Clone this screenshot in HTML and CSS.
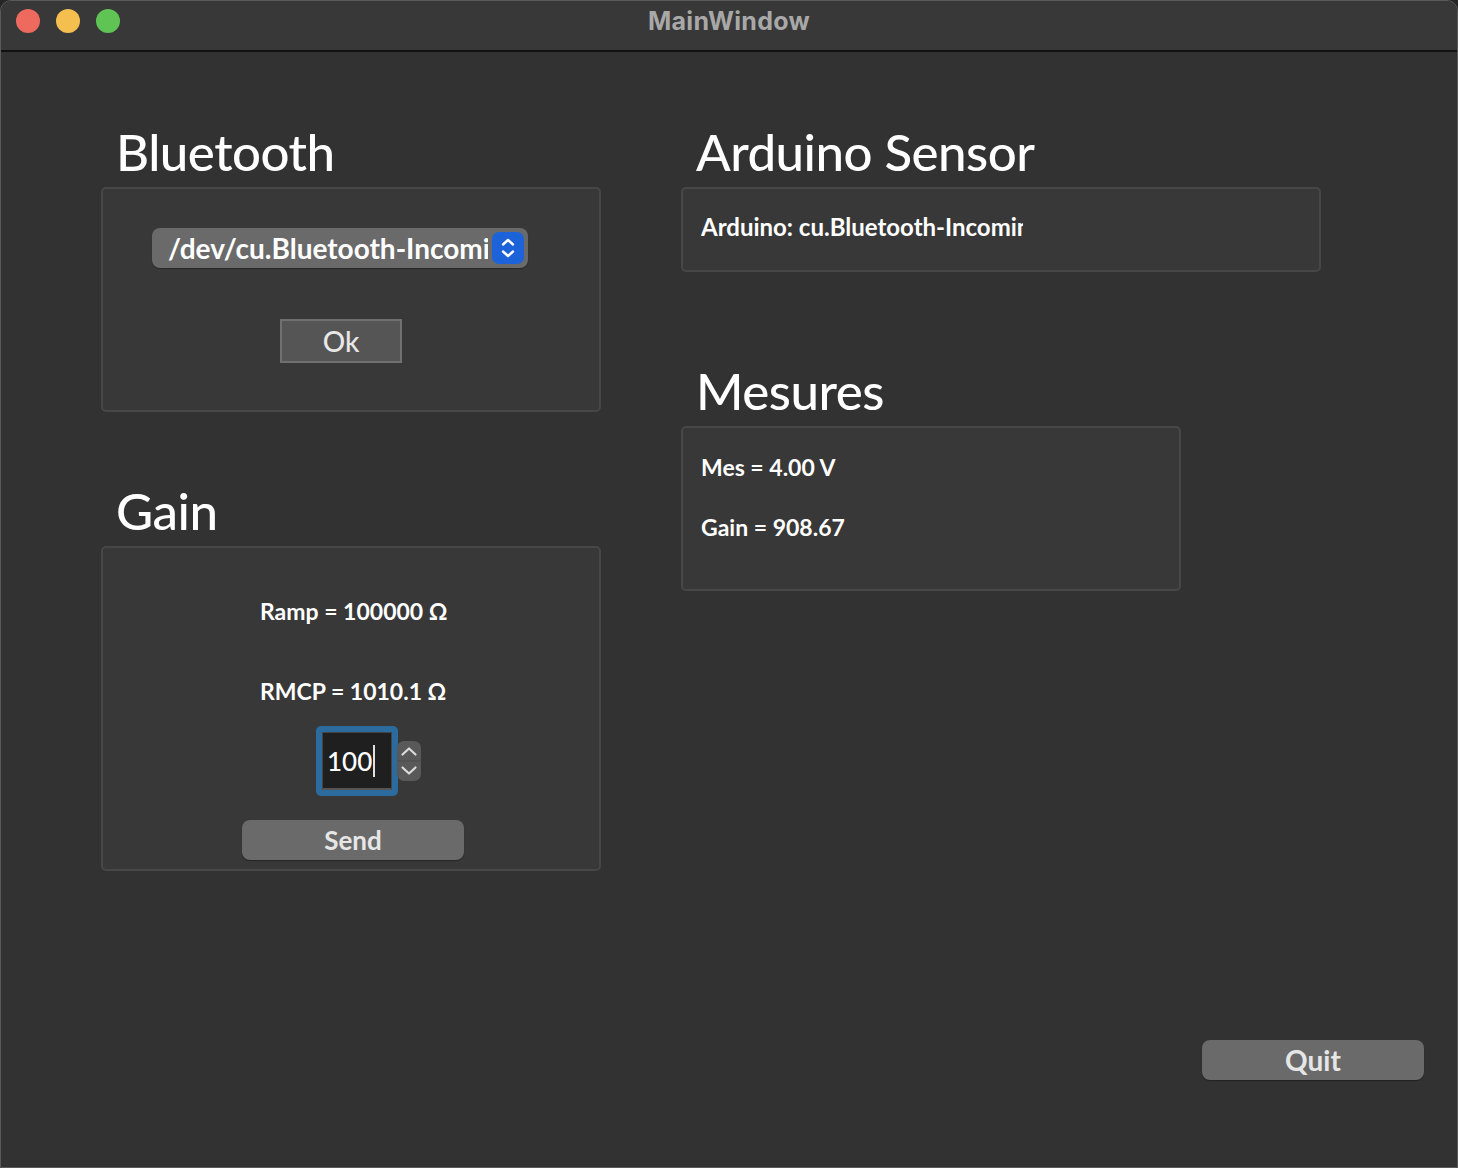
FILE: index.html
```html
<!DOCTYPE html>
<html>
<head>
<meta charset="utf-8">
<link rel="stylesheet" href="styles.css">
</head>
<body>
<div class="window">
  <header class="titlebar">
    <div class="lights">
      <span class="light red"></span>
      <span class="light yellow"></span>
      <span class="light green"></span>
    </div>
    <div class="wtitle">MainWindow</div>
  </header>
  <main class="content">
    <div class="columns">
      <section class="col left">
        <h2 class="title">Bluetooth</h2>
        <div class="box bt-box">
          <div class="combo">
            <span class="combo-text">/dev/cu.Bluetooth-Incoming-Port</span>
            <span class="combo-btn">
              <svg width="32" height="32" viewBox="0 0 32 32"><path d="M11 12.5 L16 8 L21 12.5" fill="none" stroke="#fff" stroke-width="2.4" stroke-linecap="round" stroke-linejoin="round"/><path d="M11 19.5 L16 24 L21 19.5" fill="none" stroke="#fff" stroke-width="2.4" stroke-linecap="round" stroke-linejoin="round"/></svg>
            </span>
          </div>
          <button class="ok-btn">Ok</button>
        </div>
        <h2 class="title gain-title">Gain</h2>
        <div class="box gain-box">
          <div class="line ramp">Ramp = 100000 Ω</div>
          <div class="line rmcp">RMCP = 1010.1 Ω</div>
          <div class="spin">
            <div class="spin-ring"><div class="spin-input">100<span class="caret"></span></div></div>
            <div class="stepper">
              <svg width="24" height="40" viewBox="0 0 24 40"><path d="M5.5 13.5 L12 7.5 L18.5 13.5" fill="none" stroke="#dcdcdc" stroke-width="2.2" stroke-linecap="round" stroke-linejoin="round"/><line x1="0" y1="20" x2="24" y2="20" stroke="#4c4c4c" stroke-width="1"/><path d="M5.5 26.5 L12 32.5 L18.5 26.5" fill="none" stroke="#dcdcdc" stroke-width="2.2" stroke-linecap="round" stroke-linejoin="round"/></svg>
            </div>
          </div>
          <button class="push send">Send</button>
        </div>
      </section>
      <section class="col right">
        <h2 class="title">Arduino Sensor</h2>
        <div class="box ard-box">
          <div class="ard-text">Arduino: cu.Bluetooth-Incoming-Port</div>
        </div>
        <h2 class="title mes-title">Mesures</h2>
        <div class="box mes-box">
          <div class="line">Mes = 4.00 V</div>
          <div class="line gain-line">Gain = 908.67</div>
        </div>
      </section>
    </div>
    <div class="footer">
      <button class="push quit">Quit</button>
    </div>
  </main>
</div>
</body>
</html>
```

FILE: styles.css
```css
* { box-sizing: border-box; }
html, body {
  margin: 0;
  padding: 0;
  background: #262626;
  width: 1458px;
  height: 1168px;
  overflow: hidden;
}
.window {
  width: 1458px;
  height: 1168px;
  display: flex;
  flex-direction: column;
  background: #323232;
  border: 1px solid #5a5a5a;
  border-radius: 11px 11px 0 0;
  overflow: hidden;
  font-family: "Lato", "DejaVu Sans", sans-serif;
  color: #fff;
}
.titlebar {
  height: 51px;
  flex: none;
  background: #383838;
  border-bottom: 2px solid #111;
  position: relative;
  display: flex;
  align-items: center;
}
.lights {
  display: flex;
  gap: 16px;
  padding-left: 15px;
  margin-top: -9px;
}
.light {
  width: 24px;
  height: 24px;
  border-radius: 50%;
  display: block;
}
.red { background: #ee6a5f; }
.yellow { background: #f5bf4f; }
.green { background: #5fc454; }
.wtitle {
  position: absolute;
  left: 0;
  right: 0;
  top: 5px;
  text-align: center;
  font-family: "Inter", "Liberation Sans", sans-serif;
  font-weight: 700;
  font-size: 25px;
  color: #a8a8a8;
  letter-spacing: 0.3px;
}
.content {
  flex: 1;
  display: flex;
  flex-direction: column;
  padding-left: 100px;
}
.columns {
  display: flex;
  gap: 80px;
  padding-top: 72px;
}
.col {
  display: flex;
  flex-direction: column;
}
.left { width: 500px; }
.right { width: 640px; }
.title {
  margin: 0 0 7px 15px;
  font-size: 51px;
  line-height: 56px;
  font-weight: 500;
  letter-spacing: -0.5px;
}
.gain-title { margin-top: 71px; }
.mes-title { margin-top: 91px; }
.box {
  background: #383838;
  border: 2px solid #474747;
  border-radius: 5px;
}
.bt-box {
  height: 225px;
  padding-top: 39px;
  padding-left: 49px;
}
.combo {
  width: 376px;
  height: 40px;
  background: #6a6a6a;
  border-radius: 8px;
  display: flex;
  align-items: center;
  padding-left: 16px;
  padding-right: 4px;
  box-shadow: 0 1px 1px rgba(0,0,0,0.3);
}
.combo-text {
  flex: 1;
  overflow: hidden;
  white-space: nowrap;
  font-size: 28px;
  font-weight: 700;
  color: #fff;
}
.combo-btn {
  width: 32px;
  height: 32px;
  background: #1c63d9;
  border-radius: 7px;
  display: block;
  flex: none;
  margin-left: 4px;
}
.combo-btn svg { display: block; }
.ok-btn {
  display: block;
  margin: 51px 0 0 128px;
  width: 122px;
  height: 44px;
  background: #555;
  border: 2px solid #707070;
  border-radius: 0;
  font-family: inherit;
  font-size: 28px;
  font-weight: 500;
  color: #e8e8e8;
  padding: 0;
}
.gain-box {
  height: 325px;
  padding-top: 49px;
  display: flex;
  flex-direction: column;
}
.line {
  font-size: 23px;
  line-height: 28px;
  font-weight: 700;
  color: #fff;
}
.ramp, .rmcp { margin-left: 157px; }
.rmcp { margin-top: 52px; }
.spin {
  display: flex;
  align-items: center;
  margin-left: 213px;
  margin-top: 21px;
  height: 70px;
}
.spin-ring {
  width: 82px;
  height: 70px;
  background: #2c6b9e;
  border-radius: 5px;
  padding: 6px;
}
.spin-input {
  width: 100%;
  height: 100%;
  background: #1f1f1f;
  border: 1px solid #444;
  border-bottom: 2px solid #555;
  font-size: 26px;
  line-height: 54px;
  padding-left: 4px;
  color: #fff;
  font-weight: 500;
  display: flex;
  align-items: center;
}
.caret {
  display: inline-block;
  width: 2px;
  height: 32px;
  background: #e0e0e0;
  margin-left: 1px;
}
.stepper {
  width: 24px;
  height: 40px;
  margin-left: -1px;
  background: #595959;
  border-radius: 7px;
}
.stepper svg { display: block; }
.push {
  width: 222px;
  height: 40px;
  background: #6a6a6a;
  border: none;
  border-radius: 8px;
  font-family: inherit;
  font-size: 26px;
  font-weight: 700;
  color: #e6e6e6;
  padding: 0;
  box-shadow: 0 1px 1px rgba(0,0,0,0.35);
}
.send { margin: 24px 0 0 139px; }
.ard-box {
  height: 85px;
  padding-left: 18px;
  display: flex;
  align-items: center;
}
.ard-text {
  width: 322px;
  overflow: hidden;
  white-space: nowrap;
  font-size: 24px;
  font-weight: 700;
  margin-top: -6px;
}
.mes-box {
  width: 500px;
  height: 165px;
  padding-left: 18px;
  padding-top: 25px;
}
.gain-line { margin-top: 32px; }
.footer {
  margin-top: auto;
  display: flex;
  justify-content: flex-end;
  padding-right: 33px;
  padding-bottom: 87px;
}
.quit { font-size: 28px; }
```
